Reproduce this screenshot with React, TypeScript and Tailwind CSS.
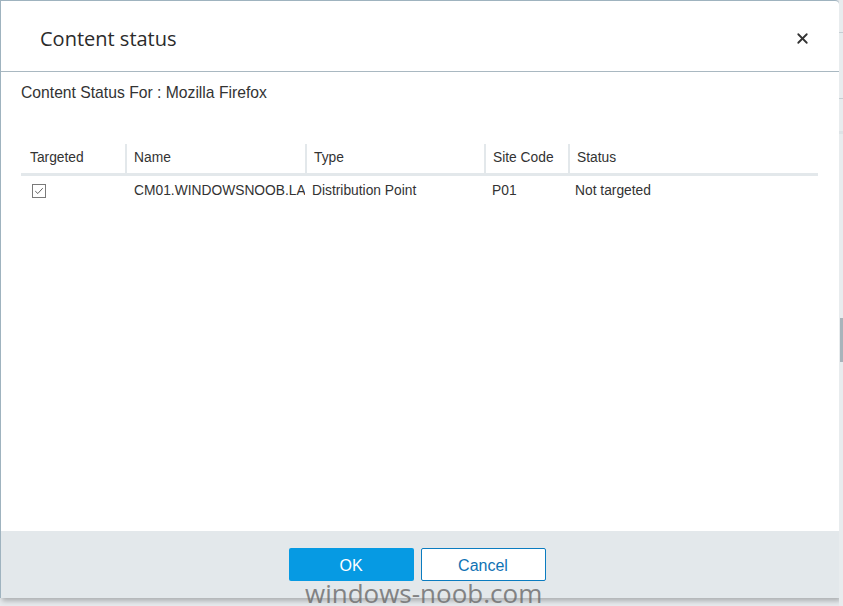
import { X } from "lucide-react";

const columns = [
  { label: "Targeted", width: "w-[104px]" },
  { label: "Name", width: "w-[180px]" },
  { label: "Type", width: "w-[179px]" },
  { label: "Site Code", width: "w-[84px]" },
  { label: "Status", width: "flex-1" },
];

function Checkbox() {
  return (
    <span className="flex h-[14px] w-[14px] items-center justify-center border border-[#7a7a7a] bg-white">
      <svg viewBox="0 0 12 12" className="h-[10px] w-[10px]" aria-hidden>
        <path d="M1.5 6.2 L4.6 9 L10.5 2.6" fill="none" stroke="#555" strokeWidth="1.1" />
      </svg>
    </span>
  );
}

export default function App() {
  return (
    <div className="relative flex h-[606px] w-[843px] overflow-hidden bg-[#e6eaed] font-['Liberation_Sans',Arial,sans-serif] text-[#333]">
      {/* dialog */}
      <div className="flex h-[598px] w-[839px] flex-col rounded-tr-[4px] border-l border-t border-[#9fb3bf] bg-white shadow-[2px_3px_5px_rgba(0,0,0,0.25)]">
        <header className="flex h-[71px] shrink-0 items-center justify-between border-b border-[#a9b8c1] pl-[39px] pr-[28px] pt-[5px]">
          <h1 className="font-['Open_Sans',sans-serif] text-[20px] leading-none text-[#2b2b2b]">Content status</h1>
          <X className="h-[17px] w-[17px] text-[#333]" strokeWidth={2.5} />
        </header>

        <div className="flex flex-1 flex-col px-[20px]">
          <p className="mt-[12px] text-[15.7px] leading-[18px]">Content Status For : Mozilla Firefox</p>

          <div className="mt-[42px] flex w-[797px] flex-col">
            <div className="flex h-[32px] border-b-[3px] border-[#e3e8eb] text-[13.8px]">
              {columns.map((c, i) => (
                <div
                  key={c.label}
                  className={`${c.width} flex items-center ${i === 0 ? "pl-[9px]" : "border-l-2 border-[#e3e8eb] pl-[7px]"}`}
                >
                  {c.label}
                </div>
              ))}
            </div>
            <div className="flex h-[30px] items-center text-[13.8px]">
              <div className="flex w-[104px] items-center pl-[11px]">
                <Checkbox />
              </div>
              <div className="w-[180px] overflow-hidden whitespace-nowrap pl-[9px]">CM01.WINDOWSNOOB.LAB</div>
              <div className="w-[179px] whitespace-nowrap pl-[7px]">Distribution Point</div>
              <div className="w-[84px] pl-[8px]">P01</div>
              <div className="flex-1 pl-[7px]">Not targeted</div>
            </div>
          </div>
        </div>

        <footer className="flex h-[67px] shrink-0 items-start justify-center gap-[7px] bg-[#e3e8eb] pt-[17px] pr-[6px]">
          <button className="h-[33px] w-[125px] rounded-[2px] bg-[#069ae3] pt-[2px] text-[16px] text-white">OK</button>
          <button className="h-[33px] w-[125px] rounded-[2px] border border-[#0b7cc0] bg-white pt-[2px] text-[16px] text-[#0f72b4]">
            Cancel
          </button>
        </footer>
      </div>

      {/* page behind the dialog */}
      <div className="flex flex-1 flex-col bg-[#e8ecee]">
        <div className="mt-[32px] h-px bg-[#c5ced3]" />
        <div className="mt-[65px] h-px bg-[#c5ced3]" />
        <div className="mt-[32px] h-[3px] bg-[#dde3e6]" />
        <div className="ml-auto mt-[184px] h-[44px] w-[3px] bg-[#a8b4bb]" />
      </div>

      {/* watermark */}
      <span className="pointer-events-none absolute left-[305px] top-[580px] font-['Open_Sans',sans-serif] text-[26px] leading-none text-[#6b6b6b] opacity-80">
        windows-noob.com
      </span>
    </div>
  );
}
